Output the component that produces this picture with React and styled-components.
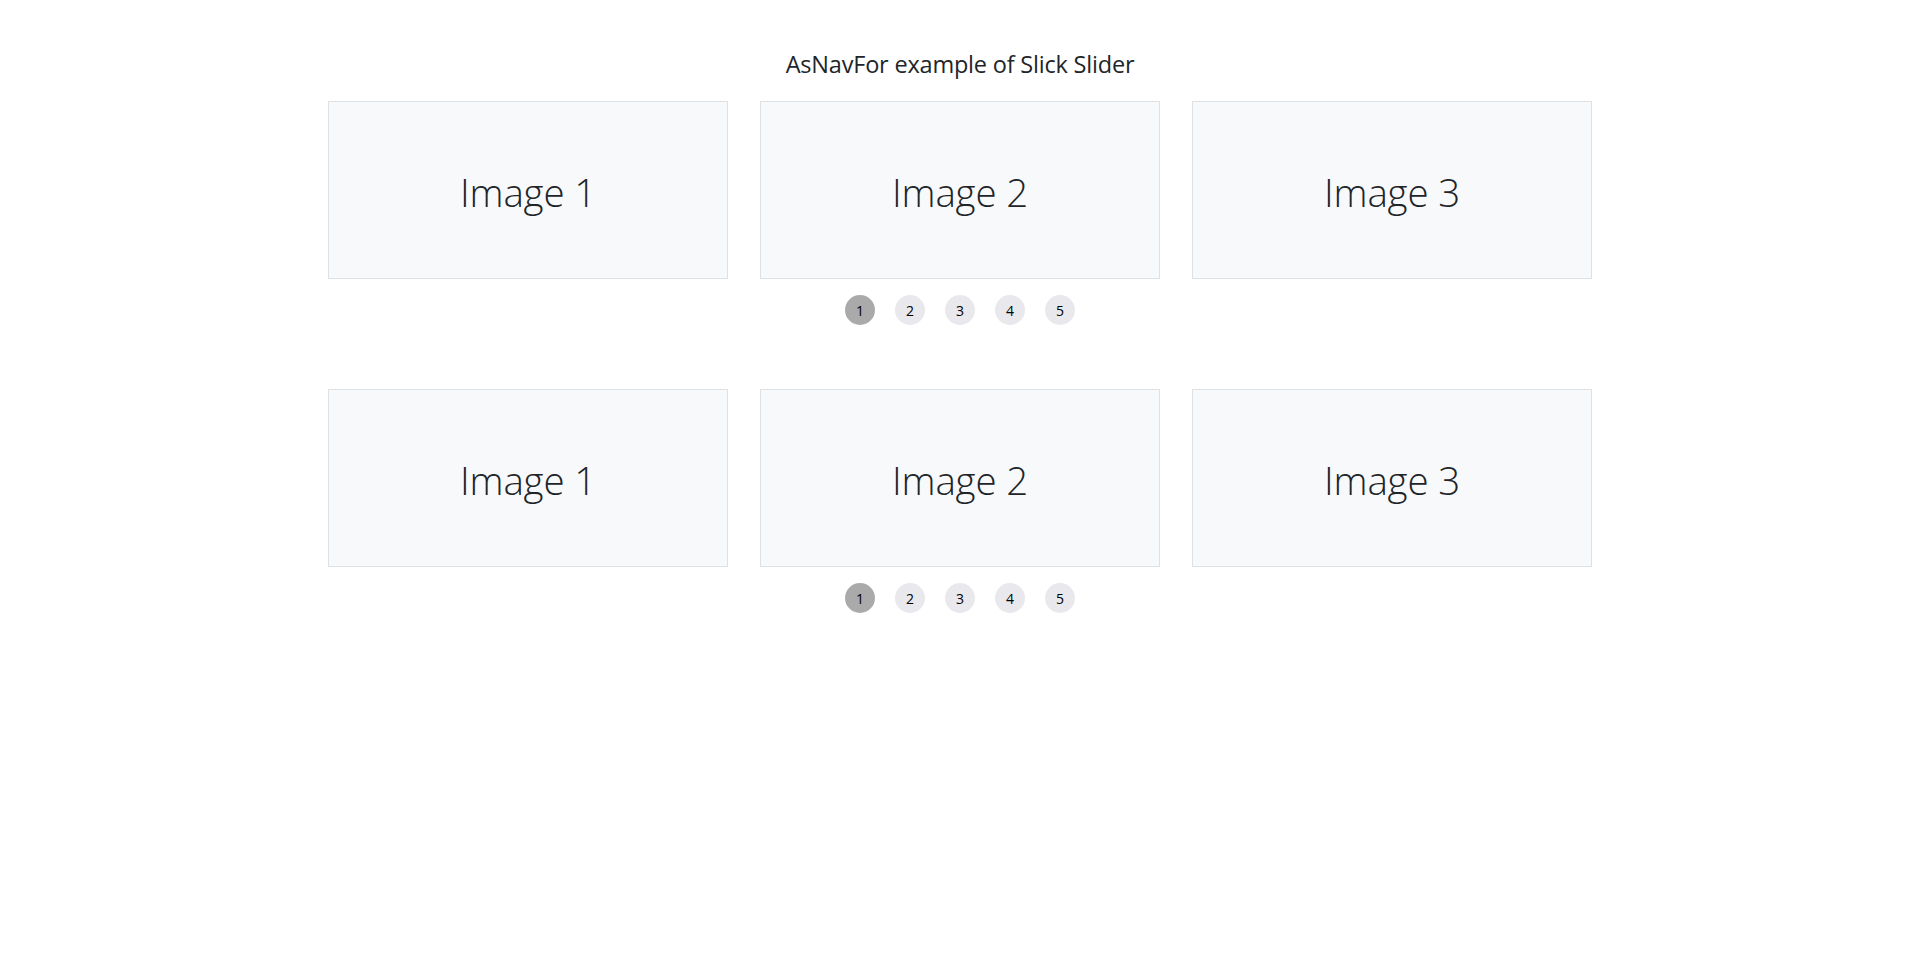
import React from 'react';
import styled, { createGlobalStyle } from 'styled-components';

const GlobalStyle = createGlobalStyle`
  body {
    margin: 0;
    background: #fff;
    color: #212529;
    font-family: "Open Sans", "Noto Sans", sans-serif;
  }
`;

const Page = styled.div`
  width: 1264px;
  margin: 0 auto;
  padding-top: 50px;
`;

const Title = styled.h2`
  margin: 0 0 22px;
  font-size: 23.5px;
  font-weight: 400;
  line-height: 29px;
  text-align: center;
  letter-spacing: -0.2px;
`;

const Slider = styled.section`
  margin-bottom: ${(p) => p.$spaceAfter || 0}px;
`;

const Track = styled.div`
  display: grid;
  grid-template-columns: repeat(3, 400px);
  gap: 32px;
`;

const Slide = styled.div`
  height: 178px;
  box-sizing: border-box;
  border: 1px solid #dee2e6;
  background: #f8f9fa;
  display: flex;
  align-items: center;
  justify-content: center;
`;

const SlideLabel = styled.h3`
  margin: 4px 0 0;
  font-size: 38.5px;
  font-weight: 300;
  letter-spacing: -0.2px;
`;

const Dots = styled.ul`
  list-style: none;
  margin: 16px 0 0;
  padding: 0;
  display: flex;
  justify-content: center;
  gap: 20px;
`;

const Dot = styled.li`
  width: 30px;
  height: 30px;
  border-radius: 50%;
  background: ${(p) => (p.$active ? '#aaaaaa' : '#e9e9ed')};
  display: flex;
  align-items: center;
  justify-content: center;
  font-size: 14px;
  color: #000;
`;

function SlickSlider({ spaceAfter }) {
  const slides = ['Image 1', 'Image 2', 'Image 3'];
  return (
    <Slider $spaceAfter={spaceAfter}>
      <Track>
        {slides.map((s) => (
          <Slide key={s}>
            <SlideLabel>{s}</SlideLabel>
          </Slide>
        ))}
      </Track>
      <Dots>
        {[1, 2, 3, 4, 5].map((n) => (
          <Dot key={n} $active={n === 1}>
            {n}
          </Dot>
        ))}
      </Dots>
    </Slider>
  );
}

export default function App() {
  return (
    <>
      <GlobalStyle />
      <Page>
        <Title>AsNavFor example of Slick Slider</Title>
        <SlickSlider spaceAfter={64} />
        <SlickSlider />
      </Page>
    </>
  );
}
